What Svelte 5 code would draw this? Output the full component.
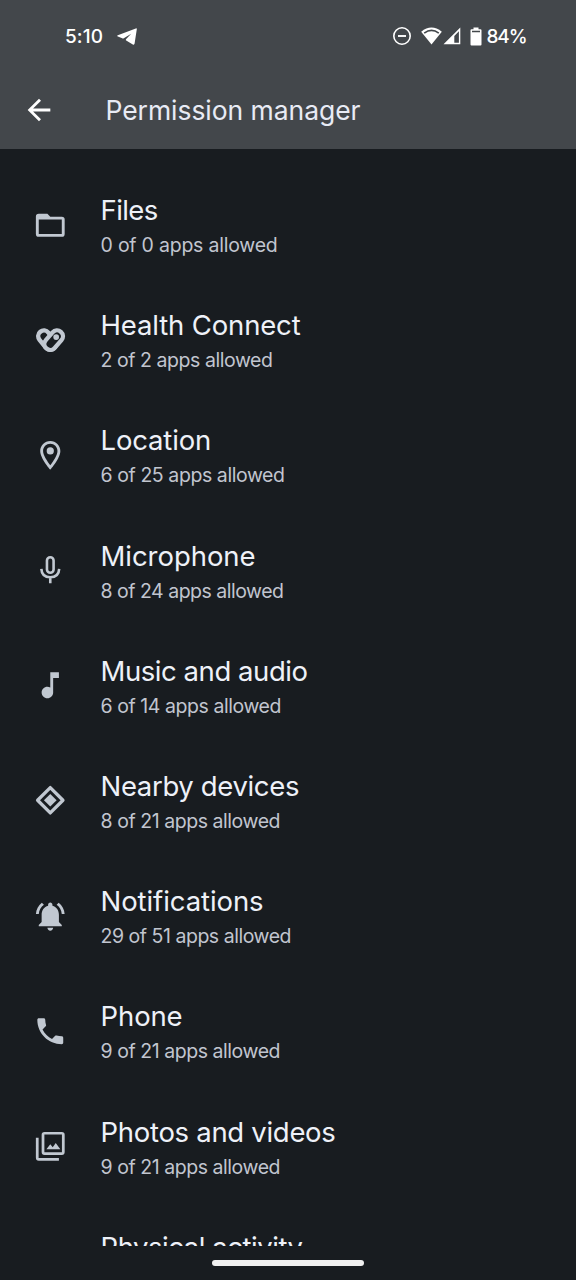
<script>
  const rows = [
    { title: 'Files', sub: '0 of 0 apps allowed', icon: 'files', tw: 56, sw: 176 },
    { title: 'Health Connect', sub: '2 of 2 apps allowed', icon: 'health', tw: 199, sw: 171 },
    { title: 'Location', sub: '6 of 25 apps allowed', icon: 'location', tw: 109.5, sw: 183 },
    { title: 'Microphone', sub: '8 of 24 apps allowed', icon: 'mic', tw: 154, sw: 182 },
    { title: 'Music and audio', sub: '6 of 14 apps allowed', icon: 'music', tw: 206, sw: 179.5 },
    { title: 'Nearby devices', sub: '8 of 21 apps allowed', icon: 'nearby', tw: 197.5, sw: 178.5 },
    { title: 'Notifications', sub: '29 of 51 apps allowed', icon: 'bell', tw: 162, sw: 189.5 },
    { title: 'Phone', sub: '9 of 21 apps allowed', icon: 'phone', tw: 81, sw: 178.5 },
    { title: 'Photos and videos', sub: '9 of 21 apps allowed', icon: 'photos', tw: 234, sw: 178.5 },
    { title: 'Physical activity', sub: '', icon: '', tw: 201, sw: 0 }
  ];

  // Tracks the text so that its line is `width` pixels long.
  function fit(node, width) {
    if (!width) return;
    const natural = node.getBoundingClientRect().width;
    node.style.letterSpacing = (width + 1 - natural) / node.textContent.length + 'px';
  }
</script>

<div class="screen">
  <header>
    <div class="status">
      <span class="time"><span use:fit={37}>5:10</span></span>
      <svg class="plane" width="20" height="17" viewBox="0 0 20 17"><path fill="#fff" d="M18.8.4Q20 0 19.8 1.2L17.6 15.6Q17.3 17.2 15.8 16.5L9.2 12.6Q8.4 11.9 9.2 11.1L14.2 5.8 6.8 10.2Q6 10.6 5.2 10.2L.9 8.6Q-.4 7.9.8 7.3Z" /></svg>
      <div class="right">
        <svg width="20" height="20" viewBox="0 0 20 20" fill="none" stroke="#fff"><circle cx="10" cy="10" r="8.2" stroke-width="1.6" /><path d="M6 10H14" stroke-width="1.9" /></svg>
        <svg class="wifi" width="21" height="18" viewBox="0 0 21 18"><path fill="#fff" d="M10.5 17.5.2 4.7Q10.5-3.5 20.8 4.7Z" /><path d="M3.2 6.1Q10.5.8 17.8 6.1" fill="none" stroke="#43474b" stroke-width="1.7" /></svg>
        <svg class="cell" width="18" height="18" viewBox="0 0 18 18"><path fill="#fff" fill-rule="evenodd" d="M17.3.5V17.2H.5ZM15.9 4.3 11.3 8.9V15.8H15.9Z" /></svg>
        <svg class="battery" width="12" height="19" viewBox="0 0 12 19"><path fill="#fff" fill-rule="evenodd" d="M3.5.5H8.5V2.2H10.5Q11.5 2.2 11.5 3.2V17.5Q11.5 18.5 10.5 18.5H1.5Q.5 18.5.5 17.5V3.2Q.5 2.2 1.5 2.2H3.5ZM2 3.7V5.2H10V3.7Z" /></svg>
        <span class="pct"><span use:fit={39}>84%</span></span>
      </div>
    </div>
    <div class="bar">
      <svg class="back" width="34" height="34" viewBox="0 0 24 24"><path fill="#fff" d="M20 11H7.83l5.59-5.59L12 4l-8 8 8 8 1.41-1.41L7.83 13H20z" /></svg>
      <h1><span use:fit={254}>Permission manager</span></h1>
    </div>
  </header>

  <main>
    {#each rows as row}
      <div class="row">
        <svg class="icon" viewBox="0 0 24 24" fill="currentColor">
          {#if row.icon === 'files'}
            <path fill-rule="evenodd" d="M4 4H10L12 6H20Q22 6 22 8V18Q22 20 20 20H4Q2 20 2 18V6Q2 4 4 4ZM4 8V18H20V8Z" />
          {:else if row.icon === 'health'}
            <g fill="none" stroke-linecap="round">
              <path d="M7.6 9.2 12 14.6" stroke="currentColor" stroke-width="11" />
              <path d="M7.6 9.2 12 14.6" stroke="#181c20" stroke-width="4.8" />
              <path d="M12 14.6 16.7 9.2" stroke="currentColor" stroke-width="11.2" />
              <path d="M12 14.6 16.7 9.2" stroke="#181c20" stroke-width="5.2" />
            </g>
            <circle cx="16.1" cy="9.8" r="2" />
          {:else if row.icon === 'location'}
            <path d="M12 2C8.13 2 5 5.13 5 9c0 5.25 7 13 7 13s7-7.75 7-13c0-3.87-3.13-7-7-7zM7 9c0-2.76 2.24-5 5-5s5 2.24 5 5c0 2.88-2.88 7.19-5 9.88C9.92 16.21 7 11.85 7 9z" /><circle cx="12" cy="9" r="2.5" />
          {:else if row.icon === 'mic'}
            <g fill="none" stroke="currentColor" stroke-width="1.8"><rect x="9.7" y="2.9" width="4.6" height="10.8" rx="2.3" /><path d="M5.8 11Q6.1 16.8 12 16.8T18.2 11M12 16.8V21" /></g>
          {:else if row.icon === 'music'}
            <path d="M12 3v10.55c-.59-.34-1.27-.55-2-.55-2.21 0-4 1.79-4 4s1.79 4 4 4 4-1.79 4-4V7h4V3h-6z" />
          {:else if row.icon === 'nearby'}
            <path d="M12 3.2 20.8 12 12 20.8 3.2 12Z" fill="none" stroke="currentColor" stroke-width="2.3" stroke-linejoin="round" /><path d="M12 7.6 16.4 12 12 16.4 7.6 12Z" />
          {:else if row.icon === 'bell'}
            <path d="M7.58 4.08 6.15 2.65C3.75 4.48 2.17 7.3 2.03 10.5h2c.15-2.65 1.51-4.97 3.55-6.42zm12.39 6.42h2c-.15-3.2-1.73-6.02-4.12-7.85l-1.42 1.43c2.02 1.45 3.39 3.77 3.54 6.42zM18 11c0-3.07-1.64-5.64-4.5-6.32V4c0-.83-.67-1.5-1.5-1.5s-1.5.67-1.5 1.5v.68C7.63 5.36 6 7.92 6 11v5l-2 2v1h16v-1l-2-2v-5zm-6 11c1.1 0 2-.9 2-2h-4c0 1.1.9 2 2 2z" />
          {:else if row.icon === 'phone'}
            <path d="M6.62 10.79c1.44 2.83 3.76 5.14 6.59 6.59l2.2-2.2c.27-.27.67-.36 1.02-.24 1.12.37 2.33.57 3.57.57.55 0 1 .45 1 1V20c0 .55-.45 1-1 1-9.39 0-17-7.61-17-17 0-.55.45-1 1-1h3.5c.55 0 1 .45 1 1 0 1.25.2 2.45.57 3.57.11.35.03.74-.25 1.02l-2.2 2.2z" />
          {:else if row.icon === 'photos'}
            <path fill-rule="evenodd" d="M8 2H20Q22 2 22 4V16Q22 18 20 18H8Q6 18 6 16V4Q6 2 8 2ZM7.9 3.9V16.1H20.1V3.9Z" /><path d="M9.3 14 12 10.6 13.7 12.6 15.8 9.7 19 14ZM2 6H3.9V20.1H18V22H4Q2 22 2 20Z" />
          {/if}
        </svg>
        <div class="text">
          <div class="title"><span use:fit={row.tw}>{row.title}</span></div>
          <div class="sub"><span use:fit={row.sw}>{row.sub}</span></div>
        </div>
      </div>
    {/each}
  </main>
  <footer><div class="pill"></div></footer>
</div>

<style>
  :global(body) { background: #181c20; }
  .screen {
    width: 576px; height: 1280px; overflow: hidden; display: flex; flex-direction: column;
    background: #181c20; color: #eef1f8; font-family: Inter, "Open Sans", sans-serif; white-space: nowrap;
  }
  svg { display: block; flex: none; }
  header { height: 149px; background: #43474b; flex: none; }
  .status { display: flex; align-items: center; height: 72px; padding: 0 49.5px 0 65px; color: #fff; font-size: 19px; font-weight: 500; }
  .time { width: 52px; }
  .plane { margin-top: 1px; }
  .right { display: flex; align-items: center; margin-left: auto; }
  .wifi { margin-left: 9px; }
  .cell { margin-left: 1px; }
  .battery { margin-left: 9px; }
  .pct { margin-left: 5px; width: 40px; }
  .bar { display: flex; align-items: center; height: 76px; padding-left: 22px; }
  h1 { margin: 0 0 0 49.5px; font-size: 26.5px; font-weight: 400; line-height: 36px; color: #e8ebf5; }
  main { height: 1079px; padding-top: 18.2px; overflow: hidden; flex: none; }
  .row { display: flex; align-items: center; height: 115.2px; padding-left: 33px; }
  .icon { width: 34.56px; height: 34.56px; color: #c1c8d1; }
  .text { margin: 4.5px 0 0 33px; }
  .title { font-size: 27.5px; font-weight: 400; line-height: 36px; }
  .sub { font-size: 19.5px; font-weight: 400; line-height: 33px; min-height: 33px; padding-top: 1px; color: #c1c5cf; }
  footer { flex: 1; display: flex; justify-content: center; padding-top: 14px; }
  .pill { width: 152px; height: 6px; border-radius: 3px; background: #f0f0f0; }
</style>
